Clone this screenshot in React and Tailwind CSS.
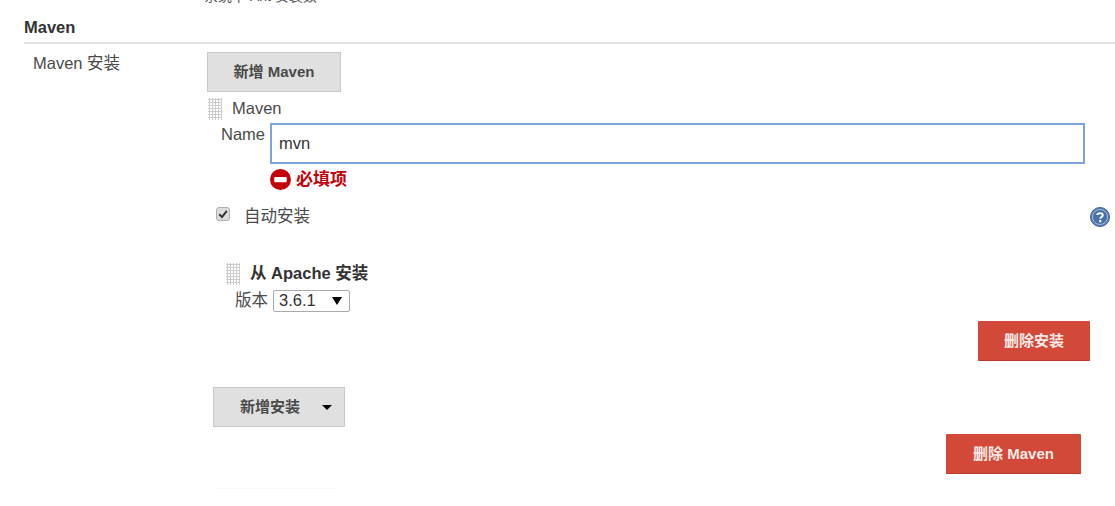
import React from "react";

const FONT = { fontFamily: '"Liberation Sans", "Noto Sans CJK SC", sans-serif' };

// dotted drag handle
function Handle({ className = "" }) {
  return (
    <div
      className={`w-[14px] h-[22px] shrink-0 bg-[radial-gradient(#cdcdcd_1.2px,transparent_1.2px)] bg-[length:3px_3px] ${className}`}
    />
  );
}

function GreyButton({ children, className = "" }) {
  return (
    <button className={`h-[40px] bg-[#e0e0e0] border border-[#c8c8c8] text-[#4a4a4a] text-[15px] font-bold flex items-center justify-center ${className}`}>
      {children}
    </button>
  );
}

function RedButton({ children, className = "" }) {
  return (
    <button className={`h-[40px] bg-[#d24939] border-b border-[#b93a2c] rounded-[1px] text-[#f7e9e6] text-[15px] font-bold flex items-center justify-center pt-[1px] ${className}`}>
      {children}
    </button>
  );
}

function ErrorIcon() {
  return (
    <svg viewBox="0 0 20 20" className="w-[21px] h-[21px] shrink-0">
      <circle cx="10" cy="10" r="10" fill="#c4000a" />
      <rect x="4" y="7.5" width="12" height="5" rx="1" fill="#fff" />
    </svg>
  );
}

function HelpIcon() {
  return (
    <svg viewBox="0 0 20 20" className="w-[20px] h-[20px]">
      <circle cx="10" cy="10" r="9.5" fill="#5b7fb5" stroke="#3f5f95" />
      <circle cx="10" cy="10" r="7.5" fill="#4a70ab" stroke="#b5c6de" strokeWidth="0.8" />
      <path d="M7.3 8 C7.3 5.8 12.8 5.6 12.8 8.2 C12.8 10 10.2 10 10.2 11.8" fill="none" stroke="#fff" strokeWidth="2" />
      <rect x="9.1" y="13" width="2.2" height="2.2" fill="#fff" />
    </svg>
  );
}

function Checkbox() {
  return (
    <span className="relative ml-[9px] w-[14px] h-[14px] mt-[-6px] shrink-0 flex">
      <input type="checkbox" readOnly checked className="appearance-none w-[14px] h-[14px] rounded-[3px] bg-[#dcdcdc] border border-[#b0b0b0]" />
      <svg viewBox="0 0 14 14" className="absolute inset-0 w-[14px] h-[14px] pointer-events-none">
        <path d="M3.2 7.2 L6 10 L10.8 3.8" fill="none" stroke="#333" strokeWidth="2" />
      </svg>
    </span>
  );
}

export default function App() {
  return (
    <div style={FONT} className="w-[1115px] h-[506px] overflow-hidden bg-white text-[#333] text-[16px]">
      {/* clipped line from the section above */}
      <div className="h-[5px] pl-[204px] overflow-hidden flex items-end">
        <span className="text-[14px] leading-[18px] text-[#555] whitespace-nowrap">系统下 Ant 安装数</span>
      </div>

      {/* section title */}
      <div className="ml-[24px] mt-[13px] h-[26px] border-b-2 border-[#e4e4e4] text-[16.5px] font-bold leading-[18px] text-[#333]">
        Maven
      </div>

      <div className="flex">
        <div className="w-[207px] pl-[33px] pt-[9px] text-[16.5px] leading-[20px] text-[#4a4a4a] shrink-0">Maven 安装</div>

        <div className="flex-1 pt-[8px]">
          <GreyButton className="w-[134px]">新增 Maven</GreyButton>

          <div className="flex items-center mt-[6px] pl-[1px] h-[22px]">
            <Handle />
            <span className="ml-[10px] mb-[2px] text-[16.5px] text-[#4a4a4a]">Maven</span>
          </div>

          <div className="flex mt-[3px] pl-[14px]">
            <span className="w-[49px] text-[16.5px] leading-[20px] mt-[1px] text-[#4a4a4a]">Name</span>
            <input
              readOnly
              value="mvn"
              className="w-[815px] h-[41px] border-2 border-[#7da2de] px-[7px] text-[16.5px] text-[#333] outline-none"
            />
          </div>

          <div className="flex items-center gap-[5px] mt-[5px] ml-[63px] text-[#c4000a] font-bold text-[17px] h-[21px]">
            <ErrorIcon />
            <span>必填项</span>
          </div>

          <div className="flex items-center mt-[16px] h-[22px] w-[903px]">
            <Checkbox />
            <span className="ml-[14px] mb-[2px] text-[16.5px] text-[#4a4a4a]">自动安装</span>
            <span className="ml-auto flex">
              <HelpIcon />
            </span>
          </div>

          <div className="flex items-center mt-[35px] pl-[19px] h-[22px]">
            <Handle />
            <span className="ml-[10px] mb-[2px] text-[16.5px] font-bold text-[#333]">从 Apache 安装</span>
          </div>

          <div className="flex items-center mt-[5px] pl-[28px] h-[22px]">
            <span className="mb-[2px] text-[16.5px] text-[#4a4a4a]">版本</span>
            <div className="ml-[5px] w-[77px] h-[22px] border border-[#aaa] rounded-[2px] flex items-center justify-between pl-[5px] pr-[7px] text-[16.5px] text-[#333]">
              <span className="mb-[2px]">3.6.1</span>
              <span className="w-0 h-0 border-x-[5px] border-x-transparent border-t-[8px] border-t-black" />
            </div>
          </div>

          <div className="flex justify-end w-[883px] mt-[9px]">
            <RedButton className="w-[112px]">删除安装</RedButton>
          </div>

          <GreyButton className="w-[132px] ml-[6px] mt-[26px] relative pr-[18px]">
            新增安装
            <span className="absolute right-[12px] top-[17px] w-0 h-0 border-x-[5px] border-x-transparent border-t-[5px] border-t-black" />
          </GreyButton>

          <div className="flex justify-end w-[874px] mt-[7px]">
            <RedButton className="w-[135px]">删除 Maven</RedButton>
          </div>

          {/* faint line at the bottom */}
          <div className="w-[120px] h-px ml-[8px] mt-[14px] bg-[#f8f8f8]" />
        </div>
      </div>
    </div>
  );
}
